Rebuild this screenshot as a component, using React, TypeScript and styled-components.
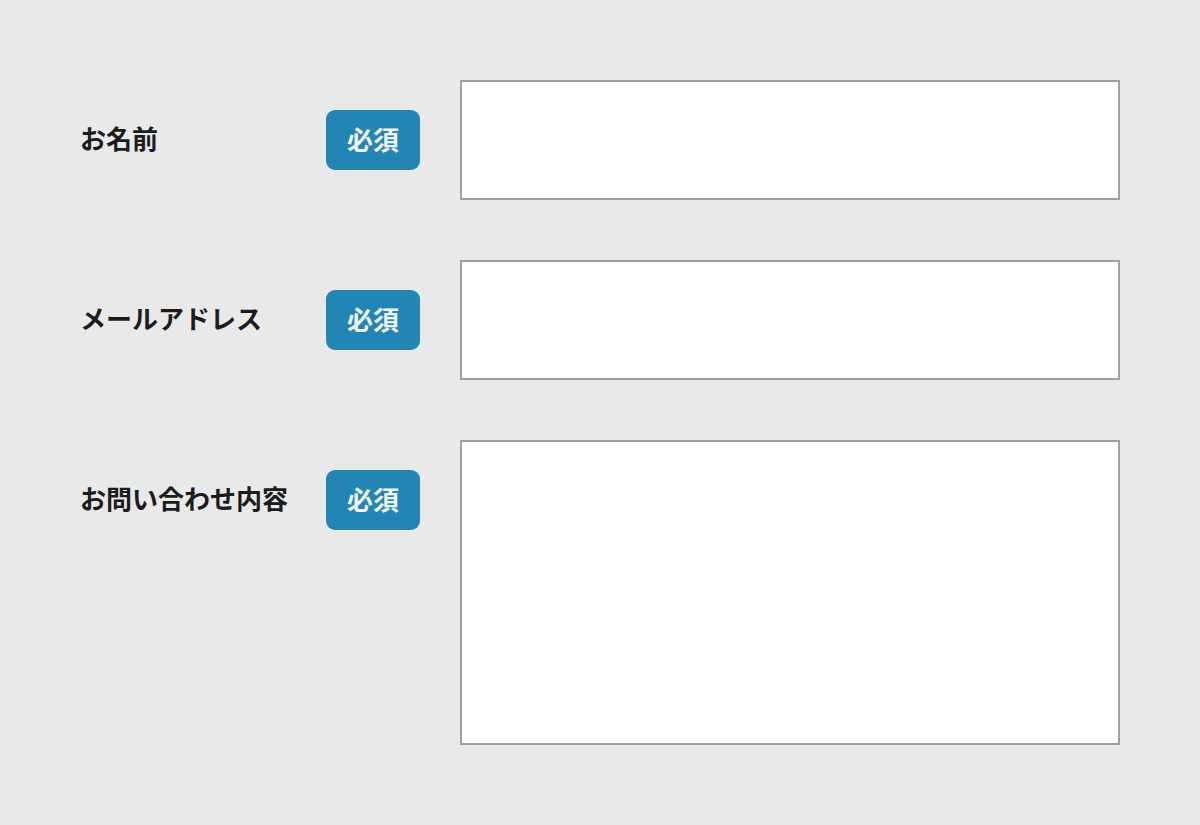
import styled, { createGlobalStyle } from 'styled-components';

const GlobalStyle = createGlobalStyle`
    body {
        margin: 0;
        background-color: #e9e9e9;
        font-family: "Noto Sans CJK JP", "Noto Sans", sans-serif;
    }
`

const Form = styled.form`
    display: flex;
    flex-direction: column;
    gap: 60px;
    padding: 80px;
`

const Row = styled.div`
    display: flex;
    align-items: flex-start;
`

const Head = styled.div`
    display: flex;
    align-items: center;
    justify-content: space-between;
    width: 340px;
    margin-top: 30px;
    margin-right: 40px;
    flex-shrink: 0;
`

const Label = styled.label`
    font-size: 26px;
    font-weight: 700;
    color: #1c1c1c;
    line-height: 56px;
    padding-bottom: 4px;
`

const Badge = styled.span`
    box-sizing: border-box;
    display: flex;
    align-items: center;
    justify-content: center;
    width: 94px;
    height: 60px;
    padding-bottom: 4px;
    border-radius: 9px;
    background-color: #2385b3;
    color: #f0f4f7;
    font-size: 26px;
    font-weight: 700;
`

const Field = styled.div<{ $tall?: boolean }>`
    box-sizing: border-box;
    width: 660px;
    height: ${p => (p.$tall ? '305px' : '120px')};
    background-color: #ffffff;
    border: 2px solid #a0a0a0;
`

const fields = [
    { label: 'お名前' },
    { label: 'メールアドレス' },
    { label: 'お問い合わせ内容', tall: true },
]

export default function App() {
    return <>
        <GlobalStyle />
        <Form>
            {fields.map(f => (
                <Row key={f.label}>
                    <Head>
                        <Label>{f.label}</Label>
                        <Badge>必須</Badge>
                    </Head>
                    <Field $tall={f.tall} />
                </Row>
            ))}
        </Form>
    </>
}
